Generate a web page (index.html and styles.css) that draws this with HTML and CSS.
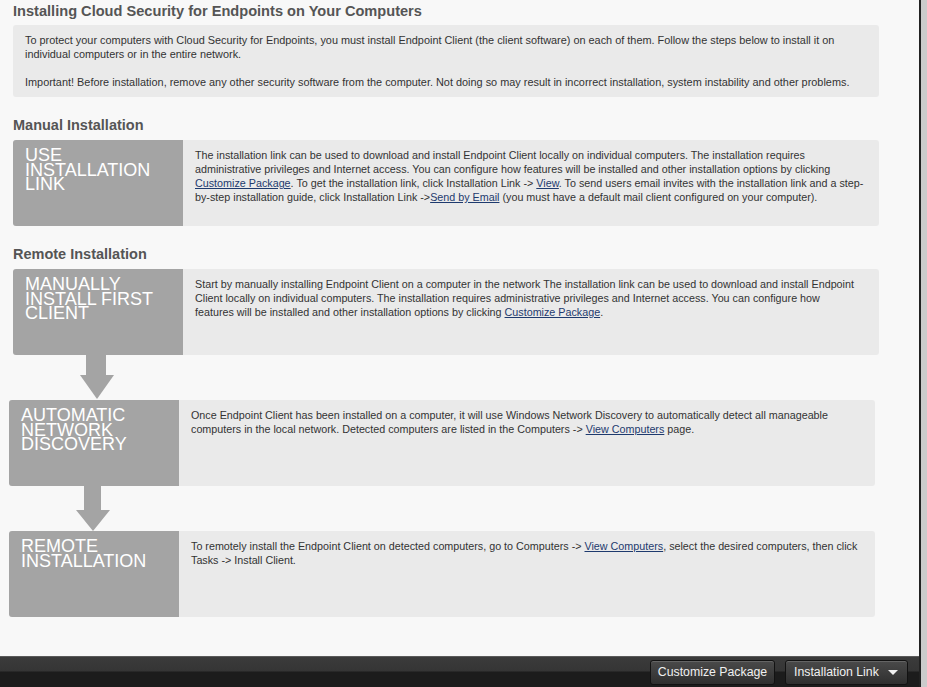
FILE: index.html
```html
<!DOCTYPE html>
<html lang="en">
<head>
    <meta charset="utf-8" />
    <title>Installing Cloud Security for Endpoints</title>
    <link rel="stylesheet" href="styles.css">
</head>
<body>
    <div class="screen">
        <div class="frame">
            <main class="content">
                <h1 class="page-title">Installing Cloud Security for Endpoints on Your Computers</h1>

                <div class="intro">
                    <p>To protect your computers with Cloud Security for Endpoints, you must install Endpoint Client (the client software) on each of them. Follow the steps below to install it on individual computers or in the entire network.</p>
                    <p>Important! Before installation, remove any other security software from the computer. Not doing so may result in incorrect installation, system instability and other problems.</p>
                </div>

                <h2 class="section-title">Manual Installation</h2>
                <div class="step">
                    <div class="step-label">Use Installation Link</div>
                    <div class="step-text">The installation link can be used to download and install Endpoint Client locally on individual computers. The installation requires administrative privileges and Internet access. You can configure how features will be installed and other installation options by clicking <a href="#">Customize Package</a>. To get the installation link, click Installation Link -&gt; <a href="#">View</a>. To send users email invites with the installation link and a step-by-step installation guide, click Installation Link -&gt;<a href="#">Send by Email</a> (you must have a default mail client configured on your computer).</div>
                </div>

                <h2 class="section-title">Remote Installation</h2>
                <div class="step">
                    <div class="step-label">Manually Install First Client</div>
                    <div class="step-text step-text--narrow">Start by manually installing Endpoint Client on a computer in the network The installation link can be used to download and install Endpoint Client locally on individual computers. The installation requires administrative privileges and Internet access. You can configure how features will be installed and other installation options by clicking <a href="#">Customize Package</a>.</div>
                </div>
                <div class="step-arrow">
                    <svg width="34" height="44" viewBox="0 0 34 44"><rect x="6" y="0" width="20" height="21" fill="#a4a4a4"/><polygon points="0,20 34,20 17,44" fill="#a4a4a4"/></svg>
                </div>
                <div class="step step--offset">
                    <div class="step-label">Automatic Network Discovery</div>
                    <div class="step-text">Once Endpoint Client has been installed on a computer, it will use Windows Network Discovery to automatically detect all manageable computers in the local network. Detected computers are listed in the Computers -&gt; <a href="#">View Computers</a> page.</div>
                </div>
                <div class="step-arrow step-arrow--offset">
                    <svg width="34" height="45" viewBox="0 0 34 45"><rect x="8" y="0" width="17" height="25" fill="#a4a4a4"/><polygon points="0,24 34,24 17,45" fill="#a4a4a4"/></svg>
                </div>
                <div class="step step--offset">
                    <div class="step-label">Remote Installation</div>
                    <div class="step-text">To remotely install the Endpoint Client on detected computers, go to Computers -&gt; <a href="#">View Computers</a>, select the desired computers, then click Tasks -&gt; Install Client.</div>
                </div>
            </main>

            <footer class="toolbar">
                <button class="tool-btn tool-btn--package">Customize Package</button>
                <button class="tool-btn tool-btn--link">Installation Link <span class="caret"></span></button>
            </footer>
        </div>
        <div class="edge"></div>
    </div>
</body>
</html>
```

FILE: styles.css
```css
html, body {
    margin: 0;
    padding: 0;
}

body {
    font-family: "Liberation Sans", Arial, sans-serif;
    color: #333;
    background: #c9c9c9;
}

.screen {
    display: flex;
    width: 927px;
    height: 687px;
    overflow: hidden;
}

.frame {
    width: 921px;
    display: flex;
    flex-direction: column;
    background: #f8f8f8;
}

.edge {
    width: 6px;
    border-left: 2px solid #222;
    background: #cbcbcb;
}

.content {
    flex: 1;
    padding: 2px 0 0 13px;
}

.page-title {
    margin: 0 0 5px;
    font-size: 14.6px;
    line-height: 18px;
    font-weight: bold;
    color: #555;
}

.intro {
    width: 842px;
    padding: 8px 12px;
    background: #eaeaea;
    border-radius: 3px;
    font-size: 10.9px;
    line-height: 14px;
}

.intro p {
    margin: 0;
}

.intro p + p {
    margin-top: 14px;
}

.section-title {
    margin: 20px 0 7px;
    font-size: 14.5px;
    line-height: 16px;
    font-weight: bold;
    color: #555;
}

.step {
    display: flex;
    width: 866px;
    height: 86px;
    background: #eaeaea;
    border-radius: 3px;
    overflow: hidden;
}

.step--offset {
    margin-left: -4px;
}

.step-label {
    width: 146px;
    flex: none;
    padding: 8px 12px 0;
    background: #a4a4a4;
    color: #fff;
    font-size: 18px;
    line-height: 14.5px;
    text-transform: uppercase;
}

.step-text {
    padding: 8px 9px 0 12px;
    font-size: 10.75px;
    line-height: 14px;
}

.step-text--narrow {
    padding-right: 22px;
}

.step-text a {
    color: #1e3a6e;
}

.step-arrow {
    height: 45px;
    padding-left: 67px;
}

.step-arrow svg {
    display: block;
}

.step-arrow--offset {
    padding-left: 63px;
}

.toolbar {
    height: 31px;
    box-sizing: border-box;
    border-top: 1px solid #5a5a5a;
    background: linear-gradient(#3b3b3b 0, #353535 14px, #1c1c1c 15px, #1c1c1c 100%);
    display: flex;
    justify-content: flex-end;
    align-items: center;
    gap: 10px;
    padding: 0 11px 0 0;
}

.tool-btn {
    height: 25px;
    padding: 0 8px;
    border: 1px solid #121212;
    border-radius: 3px;
    background: linear-gradient(#4a4a4a, #2f2f2f);
    box-shadow: inset 0 1px 0 rgba(255,255,255,0.15);
    color: #f0f0f0;
    font-family: "Liberation Sans", Arial, sans-serif;
    font-size: 12.3px;
    white-space: nowrap;
    display: flex;
    align-items: center;
    gap: 9px;
}

.tool-btn--package {
    width: 125px;
    padding: 0;
    justify-content: center;
}

.tool-btn--link {
    width: 123px;
}

.caret {
    width: 0;
    height: 0;
    border-left: 5px solid transparent;
    border-right: 5px solid transparent;
    border-top: 5px solid #f0f0f0;
}
```
